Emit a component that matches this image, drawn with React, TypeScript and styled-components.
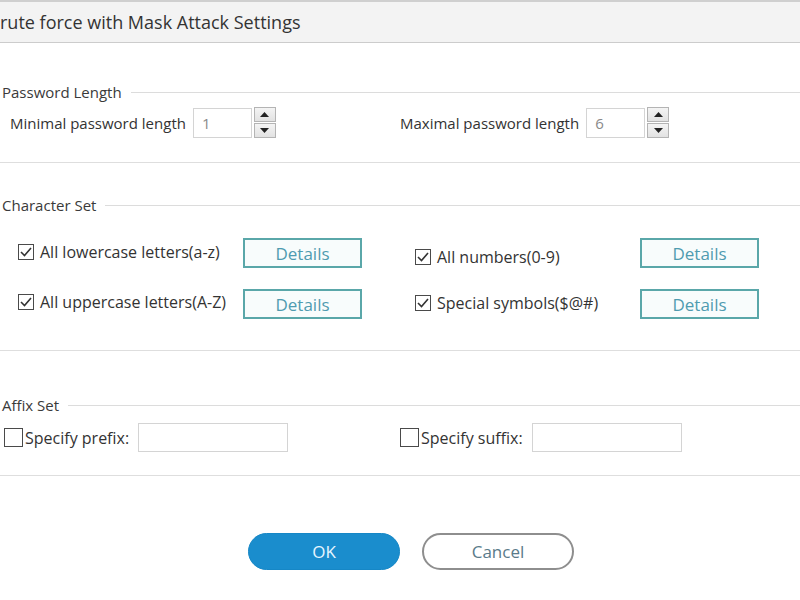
import React from "react";
import styled, { createGlobalStyle } from "styled-components";

const Global = createGlobalStyle`
  html, body { margin: 0; padding: 0; background: #ffffff; }
  body { font-family: "Open Sans", "Noto Sans", sans-serif; color: #333; }
  * { box-sizing: border-box; }
`;

const Window = styled.div`
  width: 800px;
  height: 600px;
  background: #ffffff;
  display: flex;
  flex-direction: column;
  overflow: hidden;
`;

const TitleBar = styled.div`
  height: 43px;
  background: #f3f3f3;
  border-top: 2px solid #cfcfcf;
  border-bottom: 1px solid #cccccc;
  display: flex;
  align-items: center;
`;

const Title = styled.div`
  font-size: 18px;
  color: #333;
  margin-top: -1px;
  white-space: nowrap;
`;

const Section = styled.div<{ $top: number; $bottom: number }>`
  padding-top: ${(p) => p.$top}px;
  padding-bottom: ${(p) => p.$bottom}px;
  display: flex;
  flex-direction: column;
`;

const Legend = styled.div`
  display: flex;
  align-items: center;
  height: 22px;
  padding-left: 2px;
`;

const LegendText = styled.span`
  font-size: 15px;
  color: #3a3a3a;
  white-space: nowrap;
  padding-right: 9px;
`;

const LegendLine = styled.div`
  flex: 1;
  height: 1px;
  background: #dcdcdc;
`;

const Divider = styled.div`
  height: 1px;
  background: #dedede;
`;

const Columns = styled.div<{ $top: number; $gap?: number }>`
  display: grid;
  grid-template-columns: 400px 400px;
  margin-top: ${(p) => p.$top}px;
  row-gap: ${(p) => p.$gap ?? 0}px;
`;

const Cell = styled.div<{ $pad: number }>`
  display: flex;
  align-items: center;
  padding-left: ${(p) => p.$pad}px;
`;

const FieldLabel = styled.span`
  font-size: 15px;
  color: #333;
  white-space: nowrap;
  margin-right: 7px;
`;

const NumberBox = styled.div`
  width: 59px;
  height: 30px;
  border: 1px solid #d4d4d4;
  background: #fff;
  display: flex;
  align-items: center;
  padding-left: 8px;
  font-size: 15px;
  color: #8a8a8a;
`;

const Spinner = styled.div`
  display: flex;
  flex-direction: column;
  gap: 1px;
  margin-left: 2px;
`;

const SpinBtn = styled.div`
  width: 22px;
  height: 15px;
  border: 1px solid #b4b4b4;
  background: linear-gradient(#f4f4f4, #e2e2e2);
  display: flex;
  align-items: center;
  justify-content: center;
`;

const CheckWrap = styled.div<{ $w: number; $shift: number }>`
  display: flex;
  align-items: center;
  width: ${(p) => p.$w}px;
  margin-top: ${(p) => p.$shift}px;
`;

const Box = styled.div<{ $size: number }>`
  width: ${(p) => p.$size}px;
  height: ${(p) => p.$size}px;
  border: 1.5px solid #4a4a4a;
  background: #fff;
  flex: none;
  display: flex;
  align-items: center;
  justify-content: center;
  margin-right: ${(p) => (p.$size > 17 ? 2 : 6)}px;
`;

const CheckLabel = styled.span`
  font-size: 16px;
  color: #333;
  white-space: nowrap;
`;

const DetailsBtn = styled.button`
  width: 119px;
  height: 30px;
  border: 2px solid #5aa7a9;
  background: #f8fcfc;
  color: #4f9bb0;
  font-family: "Open Sans", "Noto Sans", sans-serif;
  font-size: 17px;
  padding: 0;
  cursor: pointer;
`;

const TextBox = styled.div`
  width: 150px;
  height: 29px;
  border: 1px solid #d4d4d4;
  background: #fff;
  margin-left: 9px;
`;

const Footer = styled.div`
  display: flex;
  justify-content: center;
  gap: 22px;
  padding-top: 57px;
  padding-left: 22px;
`;

const PillBtn = styled.button<{ $primary?: boolean }>`
  width: 152px;
  height: 37px;
  border-radius: 19px;
  font-family: "Open Sans", "Noto Sans", sans-serif;
  font-size: 17px;
  cursor: pointer;
  border: ${(p) => (p.$primary ? "1px solid #1687c6" : "2px solid #8e8e8e")};
  background: ${(p) => (p.$primary ? "#1a8dcd" : "#ffffff")};
  color: ${(p) => (p.$primary ? "#e6f6ff" : "#5a7a8a")};
`;

const Tri = ({ up }: { up?: boolean }) => (
  <svg width="9" height="5" viewBox="0 0 9 5">
    <polygon points={up ? "0,5 9,5 4.5,0" : "0,0 9,0 4.5,5"} fill="#222" />
  </svg>
);

const NumField = ({ label, value, pad }: { label: string; value: string; pad: number }) => (
  <Cell $pad={pad}>
    <FieldLabel>{label}</FieldLabel>
    <NumberBox>{value}</NumberBox>
    <Spinner>
      <SpinBtn><Tri up /></SpinBtn>
      <SpinBtn><Tri /></SpinBtn>
    </Spinner>
  </Cell>
);

const Check = ({ checked, size }: { checked: boolean; size: number }) => (
  <Box $size={size}>
    {checked && (
      <svg width="12" height="10" viewBox="0 0 12 10">
        <polyline points="1,5 4.5,8.5 11,1" fill="none" stroke="#333" strokeWidth="1.6" />
      </svg>
    )}
  </Box>
);

const CharOption = ({ label, pad, shift }: { label: string; pad: number; shift: number }) => (
  <Cell $pad={pad}>
    <CheckWrap $w={225} $shift={shift}>
      <Check checked size={16} />
      <CheckLabel>{label}</CheckLabel>
    </CheckWrap>
    <DetailsBtn>Details</DetailsBtn>
  </Cell>
);

const AffixOption = ({ label, pad }: { label: string; pad: number }) => (
  <Cell $pad={pad}>
    <Check checked={false} size={19} />
    <CheckLabel>{label}</CheckLabel>
    <TextBox />
  </Cell>
);

export default function App() {
  return (
    <Window>
      <Global />
      <TitleBar>
        <Title>rute force with Mask Attack Settings</Title>
      </TitleBar>
      <Section $top={38} $bottom={24}>
        <Legend>
          <LegendText>Password Length</LegendText>
          <LegendLine />
        </Legend>
        <Columns $top={4}>
          <NumField label="Minimal password length" value="1" pad={10} />
          <NumField label="Maximal password length" value="6" pad={0} />
        </Columns>
      </Section>
      <Divider />
      <Section $top={31} $bottom={31}>
        <Legend>
          <LegendText>Character Set</LegendText>
          <LegendLine />
        </Legend>
        <Columns $top={22} $gap={21}>
          <CharOption label="All lowercase letters(a-z)" pad={18} shift={-3} />
          <CharOption label="All numbers(0-9)" pad={15} shift={8} />
          <CharOption label="All uppercase letters(A-Z)" pad={18} shift={-4} />
          <CharOption label="Special symbols($@#)" pad={15} shift={-2} />
        </Columns>
      </Section>
      <Divider />
      <Section $top={43} $bottom={23}>
        <Legend>
          <LegendText>Affix Set</LegendText>
          <LegendLine />
        </Legend>
        <Columns $top={7}>
          <AffixOption label="Specify prefix:" pad={4} />
          <AffixOption label="Specify suffix:" pad={0} />
        </Columns>
      </Section>
      <Divider />
      <Footer>
        <PillBtn $primary>OK</PillBtn>
        <PillBtn>Cancel</PillBtn>
      </Footer>
    </Window>
  );
}
